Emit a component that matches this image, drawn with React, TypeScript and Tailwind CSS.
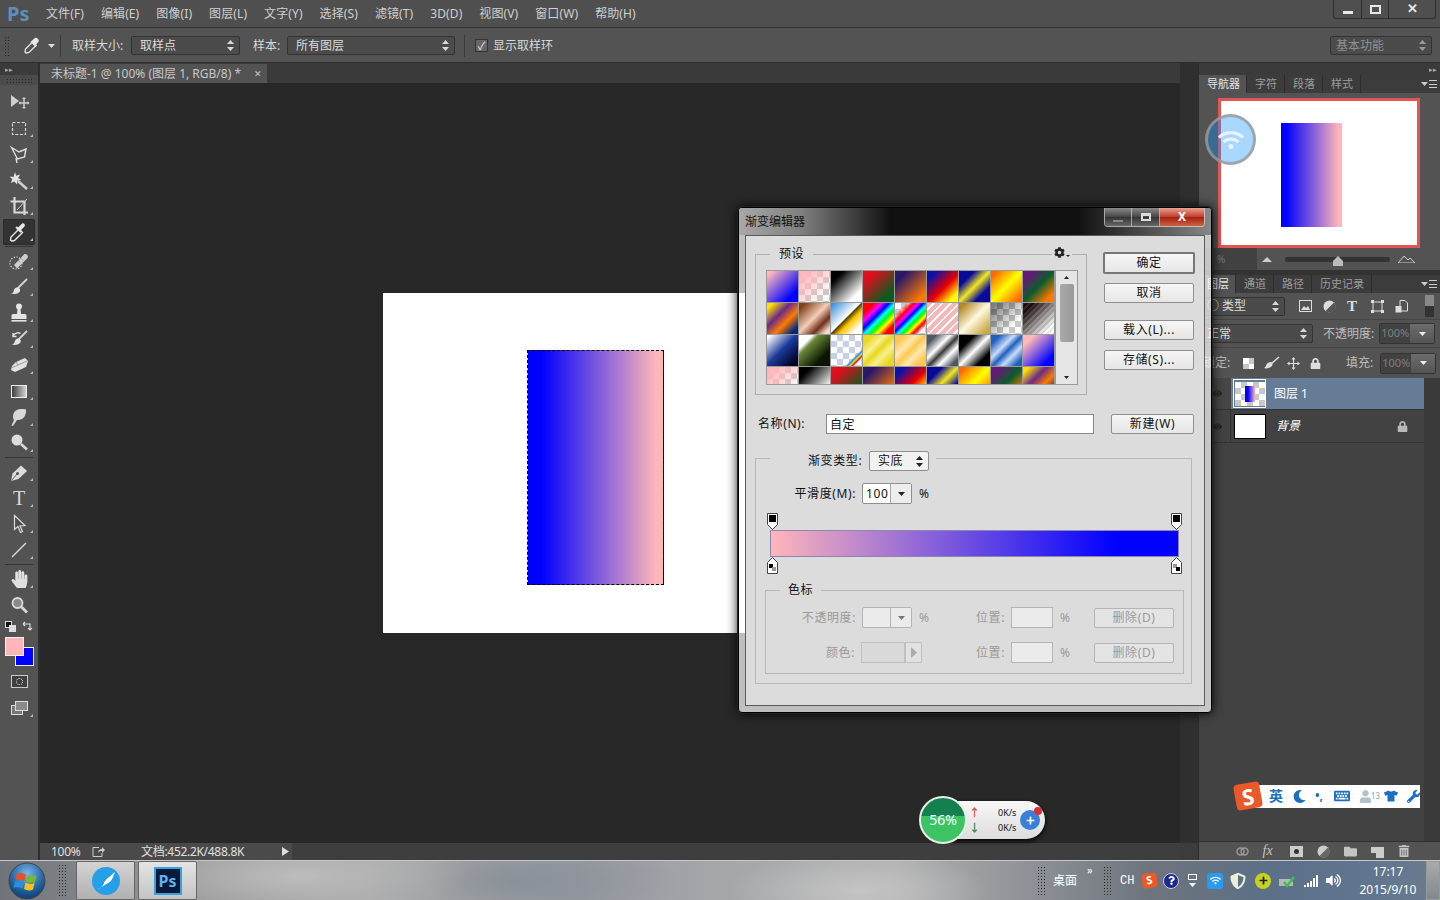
import React from "react";
import {
  FaCog,
  FaEye,
  FaFolder,
  FaHandPaper,
  FaKeyboard,
  FaLock,
  FaMoon,
  FaPlus,
  FaQuestion,
  FaShieldAlt,
  FaTrashAlt,
  FaTshirt,
  FaUser,
  FaVolumeUp,
  FaWifi,
  FaWrench,
} from "react-icons/fa";

const menus = ["文件(F)", "编辑(E)", "图像(I)", "图层(L)", "文字(Y)", "选择(S)", "滤镜(T)", "3D(D)", "视图(V)", "窗口(W)", "帮助(H)"];

const checker = "bg-[repeating-conic-gradient(#c8c8c8_0_25%,#ffffff_0_50%)] bg-[length:12px_12px]";

const presets = [
  "bg-[linear-gradient(135deg,#ffb8bc_8%,#0000ff_80%)]",
  "bg-[linear-gradient(135deg,#ffb8bc_15%,#ffb8bc00_85%),repeating-conic-gradient(#c8c8c8_0_25%,#ffffff_0_50%)] bg-[length:100%_100%,12px_12px]",
  "bg-[linear-gradient(135deg,#000000_20%,#ffffff_80%)]",
  "bg-[linear-gradient(135deg,#e00f1c_20%,#0b5a1e_80%)]",
  "bg-[linear-gradient(135deg,#2a1868_20%,#ff7800_85%)]",
  "bg-[linear-gradient(135deg,#0a10a8_15%,#e80000_55%,#ffff00_85%)]",
  "bg-[linear-gradient(135deg,#0a0a9a_25%,#f2e820_50%,#0a0a9a_75%)]",
  "bg-[linear-gradient(135deg,#ff6a00_10%,#ffff00_50%,#ff6a00_90%)]",
  "bg-[linear-gradient(135deg,#6a1878_15%,#0a5c2c_50%,#ff7800_85%)]",
  "bg-[linear-gradient(135deg,#ffe000_10%,#6a2a88_38%,#ff7a00_62%,#002a78_88%)]",
  "bg-[linear-gradient(135deg,#804018_10%,#f4cdb8_48%,#703018_72%,#f0d8c8_90%)]",
  "bg-[linear-gradient(135deg,#2a88d8,#ffffff_47%,#5a4000_50%,#ffc800_62%,#ffffff_85%)]",
  "bg-[linear-gradient(135deg,#ff0000_18%,#ff00ff_30%,#0000ff_42%,#00ffff_52%,#00ff00_62%,#ffff00_72%,#ff0000_84%)]",
  "bg-[linear-gradient(135deg,#ffffff00_18%,#ff0000_30%,#ff00ff_38%,#0000ff_46%,#00ffff_54%,#00ff00_62%,#ffff00_70%,#ff0000_78%,#ffffff00_88%),repeating-conic-gradient(#c8c8c8_0_25%,#ffffff_0_50%)] bg-[length:100%_100%,12px_12px]",
  "bg-[repeating-linear-gradient(135deg,#f4b8b8_0_4px,#ffffff_4px_6px)]",
  "bg-[linear-gradient(135deg,#b08a20_10%,#fff8e0_50%,#c8a840_90%)]",
  "bg-[linear-gradient(135deg,#00000090,#00000000_75%),repeating-conic-gradient(#c8c8c8_0_25%,#ffffff_0_50%)] bg-[length:100%_100%,12px_12px]",
  "bg-[repeating-linear-gradient(135deg,#ffffff18_0_2px,#00000018_2px_4px),linear-gradient(135deg,#201010_20%,#ffffff_85%)]",
  "bg-[linear-gradient(135deg,#ffffff_5%,#1a3a9a_48%,#000020_90%)]",
  "bg-[linear-gradient(135deg,#ffffff_22%,#6a8a3a_32%,#0a1400_75%)]",
  "bg-[linear-gradient(135deg,#d0d8f000_72%,#2090e0_76%,#f0e020_80%,#d02020_84%,#ffffff00_88%),repeating-conic-gradient(#c8d0e8_0_25%,#ffffff_0_50%)] bg-[length:100%_100%,12px_12px]",
  "bg-[linear-gradient(135deg,#e8d820_15%,#f8f090_35%,#e8d820_50%,#f8f090_65%,#e8d820_85%)]",
  "bg-[linear-gradient(135deg,#ffc850_15%,#ffe8b0_35%,#ffc850_50%,#ffe8b0_65%,#ffc850_85%)]",
  "bg-[linear-gradient(135deg,#505860_15%,#ffffff_38%,#383838_52%,#ffffff_68%,#505860_88%)]",
  "bg-[linear-gradient(135deg,#000000_25%,#ffffff_50%,#000000_78%)]",
  "bg-[linear-gradient(135deg,#2060c0_15%,#c8dcf8_38%,#2060c0_52%,#c8dcf8_68%,#2060c0_88%)]",
  "bg-[linear-gradient(135deg,#ffb8bc_18%,#0000ff_82%)]",
  "bg-[linear-gradient(135deg,#ffb8bc_15%,#ffb8bc00_85%),repeating-conic-gradient(#c8c8c8_0_25%,#ffffff_0_50%)] bg-[length:100%_100%,12px_12px]",
  "bg-[linear-gradient(135deg,#000000_20%,#ffffff_80%)]",
  "bg-[linear-gradient(135deg,#e00f1c_20%,#0b5a1e_80%)]",
  "bg-[linear-gradient(135deg,#2a1868_20%,#ff7800_85%)]",
  "bg-[linear-gradient(135deg,#0a10a8_15%,#e80000_55%,#ffff00_85%)]",
  "bg-[linear-gradient(135deg,#0a0a9a_25%,#f2e820_50%,#0a0a9a_75%)]",
  "bg-[linear-gradient(135deg,#ff6a00_10%,#ffff00_50%,#ff6a00_90%)]",
  "bg-[linear-gradient(135deg,#6a1878_15%,#0a5c2c_50%,#ff7800_85%)]",
  "bg-[linear-gradient(135deg,#ffe000_10%,#6a2a88_38%,#ff7a00_62%,#002a78_88%)]",
];

const UpDown = ({ color = "#d0d0d0" }: { color?: string }) => (
  <svg width="7" height="11" viewBox="0 0 7 11" fill={color}>
    <path d="M3.5 0 7 4H0zM3.5 11 0 7h7z" />
  </svg>
);

const Caret = ({ color = "#ddd" }: { color?: string }) => (
  <svg width="7" height="4" viewBox="0 0 7 4" fill={color}>
    <path d="M0 0h7L3.5 4z" />
  </svg>
);

const Grip = ({ className }: { className: string }) => (
  <div className={`bg-[radial-gradient(#2a2a2a_1px,transparent_1px)] bg-[length:3px_3px] ${className}`} />
);

const DarkSelect = ({ label, className, dim }: { label: string; className: string; dim?: boolean }) => (
  <div className={`flex h-[19px] items-center justify-between rounded-[2px] border border-[#333] bg-[#4b4b4b] pr-[5px] ${dim ? "pl-[5px] text-[#8f8f8f]" : "pl-2 text-[#dcdcdc]"} ${className}`}>
    <span>{label}</span>
    <UpDown color={dim ? "#999" : "#d8d8d8"} />
  </div>
);

// every tool is a 32x26 strip, the little corner triangle included
const Tool = ({ children, flyout = true, active }: { children: React.ReactNode; flyout?: boolean; active?: boolean }) => (
  <div className={`mx-auto h-[26px] w-[32px] rounded-[2px] ${active ? "bg-[#333] shadow-[inset_0_0_0_1px_#2a2a2a]" : ""}`}>
    <svg width="32" height="26" viewBox="3 0 32 26" fill="#cfcfcf" stroke="none">
      {children}
      {flyout && <polygon points="33,19 33,22 30,22" fill="#b8b8b8" />}
    </svg>
  </div>
);

const Sep = () => <div className="mx-[5px] my-px h-px bg-[#333]" />;

const Toolbar = () => (
  <div className="flex w-[38px] shrink-0 flex-col bg-[#535353]">
    <div className="flex h-[12px] items-center bg-[#3b3b3b] pl-[5px] text-[7px] leading-none text-[#aaa]">▸▸</div>
    <div className="flex h-[10px] items-center justify-center bg-[#4b4b4b]">
      <Grip className="h-[5px] w-[26px]" />
    </div>
    <div className="pt-[4px]">
      <Tool flyout={false}>
        <polygon points="11,6 19,12 11,18" />
        <path d="M24 9v10M19.5 14h9" stroke="#cfcfcf" strokeWidth="1.5" />
        <path d="M24 8l2 2h-4zM24 20l2-2h-4zM18.5 14l2-2v4zM29.5 14l-2-2v4z" />
      </Tool>
      <Tool>
        <rect x="12.5" y="7.5" width="13" height="12" fill="none" stroke="#d8d8d8" strokeWidth="1.2" strokeDasharray="3 1.6" />
      </Tool>
      <Tool>
        <path d="M11.5 6.5 19 11l7-3-1.5 8-7 2z" fill="none" stroke="#e0e0e0" strokeWidth="1.4" />
        <path d="M16 17l1 5" stroke="#e0e0e0" strokeWidth="1.4" />
      </Tool>
      <Tool>
        <path d="M15 5l1.2 3.8L20 7.5l-1.8 3.4 3 2.1-3.8.6-.4 3.9-2.6-2.9-3.7 1.4 1.7-3.6-2.7-2.8 3.9.4z" fill="#e4e4e4" />
        <path d="M18 14l9 8" stroke="#d0d0d0" strokeWidth="2.4" />
      </Tool>
      <Tool>
        <path d="M14.5 4v15.5H28M10.5 8.5h14V22" fill="none" stroke="#d8d8d8" strokeWidth="2.2" />
        <path d="M17 17 27 6" stroke="#cfcfcf" strokeWidth="1" />
      </Tool>
      <Tool active>
        <path d="M11.5 22l-1-1 .5-3 8-8 3.5 3.5-8 8z" fill="none" stroke="#e8e8e8" strokeWidth="1.4" />
        <path d="M18 8.5l3-3 1-.8c1.6-1.2 3.8 1 2.6 2.6l-.8 1-3 3 1 1-1.5 1.5-5-5 1.5-1.5z" fill="#e8e8e8" />
      </Tool>
      <Sep />
      <Tool>
        <circle cx="16" cy="15" r="6" fill="none" stroke="#cfcfcf" strokeWidth="1.2" strokeDasharray="1.4 1.4" />
        <path d="M14 17 24 6.5c2-1.5 5 1.5 3.5 3.5L17 20.5z" fill="#d0d0d0" />
        <path d="M18 12l3 3M20.5 10l3 3" stroke="#777" strokeWidth="1" strokeDasharray="1 1" />
      </Tool>
      <Tool>
        <path d="M17 15 27 5" stroke="#d4d4d4" strokeWidth="1.8" />
        <path d="M17 13.5c3 0 4 2.5 2.5 4.5-1.5 2-5 2.5-8.500 1.5 2.5-.5 2.5-2 3-3.5.4-1.5 1.5-2.5 3-2.5z" fill="#e4e4e4" />
      </Tool>
      <Tool>
        <circle cx="19" cy="6.5" r="3" fill="#e4e4e4" />
        <path d="M17.5 9h3l.5 5h-4z" fill="#e4e4e4" />
        <path d="M11.5 15.5c0-1 1-1.5 2-1.5h11c1 0 2 .5 2 1.5V19h-15z" fill="#e4e4e4" />
        <rect x="11.5" y="20" width="15" height="1.6" fill="#e4e4e4" />
      </Tool>
      <Tool>
        <path d="M18 14 27 5" stroke="#d4d4d4" strokeWidth="1.8" />
        <path d="M18 12.5c3 .5 3.5 3 2 4.5-2 2-5 2.5-8.5 1.5 2.5-.5 3-2 3.5-3.5.4-1.5 1.5-2.5 3-2.5z" fill="#e4e4e4" />
        <path d="M13 10c1.5-3 5-4 7.5-2.5M13 7v3.5h3.5" fill="none" stroke="#e0e0e0" strokeWidth="1.4" />
      </Tool>
      <Tool>
        <path d="M16 10 25 6l3 3-2 6-11 5-4-2 1-4z" fill="#e2e2e2" />
        <path d="M16 10l2 3-7 3" fill="none" stroke="#888" strokeWidth=".8" />
        <path d="M18 13l9-4" stroke="#888" strokeWidth=".8" />
      </Tool>
      <Tool>
        <defs>
          <linearGradient id="toolGrad" x1="0" x2="1" y1="0" y2="0">
            <stop offset="0" stopColor="#3a3a3a" />
            <stop offset="1" stopColor="#d8d8d8" />
          </linearGradient>
        </defs>
        <rect x="11.5" y="7.5" width="15" height="12" fill="url(#toolGrad)" stroke="#eee" />
      </Tool>
      <Tool>
        <path d="M14 16c-2-3-1-9 4-10.5 3-.8 7-.5 8 0 .5 3-1 8-4 9.5-2 1-4 1-5 1l-4 6-1.5-.5z" fill="#d8d8d8" />
      </Tool>
      <Tool>
        <circle cx="17" cy="10" r="5.5" fill="#dcdcdc" />
        <path d="M21 14l6 5.5" stroke="#d8d8d8" strokeWidth="2.6" />
      </Tool>
      <Sep />
      <Tool>
        <path d="M11 22l1.5-7.5L21 6.5l6 5.5-8.5 8z" fill="#dcdcdc" />
        <path d="M11.5 21.5 17 15" stroke="#555" strokeWidth=".9" />
        <circle cx="17.5" cy="14.5" r="1.5" fill="#555" />
      </Tool>
      <Tool>
        <text x="19" y="20" textAnchor="middle" fontFamily="Liberation Serif" fontSize="20" fill="#d8d8d8">T</text>
      </Tool>
      <Tool>
        <path d="M14.5 4.5v14l3.5-3 2.5 6 2-1-2.5-5.5 5-.5z" fill="#4e4e4e" stroke="#dcdcdc" strokeWidth="1.2" />
      </Tool>
      <Tool>
        <path d="M12 20 26 6" stroke="#d8d8d8" strokeWidth="1.4" />
      </Tool>
      <Sep />
      <Tool>
        <g transform="translate(10.5 4)">
          <FaHandPaper size={18} color="#e0e0e0" />
        </g>
      </Tool>
      <div className="mt-px">
        <Tool flyout={false}>
          <circle cx="17.5" cy="10" r="5" fill="#8a8a8a" stroke="#dcdcdc" strokeWidth="1.8" />
          <path d="M21.5 14l5.5 5.5" stroke="#d8d8d8" strokeWidth="2.8" />
        </Tool>
      </div>
    </div>

    <div className="flex h-[15px] items-center justify-between px-[5px]">
      <svg width="11" height="11" viewBox="0 0 11 11">
        <rect x=".5" y=".5" width="6" height="6" fill="#111" stroke="#ddd" />
        <rect x="4.5" y="4.5" width="6" height="6" fill="#ddd" stroke="#ddd" />
      </svg>
      <svg width="11" height="11" viewBox="0 0 11 11" fill="none" stroke="#ddd" strokeWidth="1.1">
        <path d="M1 3h7v6M1 3l2-2M1 3l2 2M8 9l2-2M8 9 6 7" />
      </svg>
    </div>
    {/* colour swatches overlap, that's what the negative margin is for */}
    <div className="mt-[3px] h-[30px] pl-[5px]">
      <div className="relative z-10 h-[19px] w-[19px] border border-[#f0f0f0] bg-[#ffb6ba]" />
      <div className="ml-[10px] mt-[-9px] h-[19px] w-[19px] border border-[#f0f0f0] bg-[#0000ff]" />
    </div>
    <div className="flex h-[28px] items-center justify-center">
      <div className="flex h-[13px] w-[17px] items-center justify-center border border-[#ccc] bg-[#3f3f3f]">
        <div className="h-[7px] w-[7px] rounded-full border border-dotted border-[#ddd]" />
      </div>
    </div>
    <div className="h-[26px]">
      <Tool>
        <rect x="11.5" y="10.5" width="11" height="9" fill="#777" stroke="#ddd" />
        <rect x="15.5" y="6.5" width="12" height="9" fill="#8a8a8a" stroke="#ddd" />
      </Tool>
    </div>
  </div>
);

const Canvas = () => (
  <div className="flex flex-1 items-center justify-center bg-[#282828]">
    <div className="h-[340px] w-[454px] bg-white pl-[144px] pt-[57px]">
      <div className="h-[235px] w-[137px] border border-dashed border-black bg-[linear-gradient(90deg,#0000ff_10%,#ffb6ba_95%)]" />
    </div>
  </div>
);

const PanelTabs = ({ tabs }: { tabs: string[] }) => (
  <div className="flex h-[18px] items-stretch bg-[#3c3c3c] text-[11px] leading-[18px]">
    {tabs.map((t, i) => (
      <div key={t} className={`border-r border-[#2e2e2e] pl-2 ${i === 0 ? "bg-[#535353] pr-[6px] text-[#e6e6e6]" : "pr-[7px] text-[#9c9c9c]"}`}>
        {t}
      </div>
    ))}
    <div className="ml-auto flex items-center gap-px pr-[3px]">
      <Caret color="#ccc" />
      <div className="h-[8px] w-[8px] border-y border-[#ccc] bg-[linear-gradient(#ccc,#ccc)] bg-[length:100%_1px] bg-center bg-no-repeat" />
    </div>
  </div>
);

const PctBox = () => (
  <div className="flex h-[21px] w-[56px] rounded-[2px] border border-[#333]">
    <div className="flex w-[30px] items-center justify-center bg-[#424242] text-[11px] text-[#7f7f7f]">100%</div>
    <div className="flex flex-1 items-center justify-center bg-[linear-gradient(#6c6c6c,#545454)]">
      <Caret color="#eee" />
    </div>
  </div>
);

const Panels = () => (
  <div className="flex w-[242px] shrink-0 flex-col border-l border-[#2c2c2c] bg-[#535353] text-[#cfcfcf]">
    <div className="flex h-[12px] items-center justify-end bg-[#3b3b3b] pr-[3px] text-[7px] leading-none text-[#aaa]">▸▸</div>
    <PanelTabs tabs={["导航器", "字符", "段落", "样式"]} />
    <div className="pl-[19px] pt-[5px]">
      <div className="h-[150px] w-[202px] border-[3px] border-[#e25555] bg-white pl-[60px] pt-[22px]">
        <div className="h-[104px] w-[61px] bg-[linear-gradient(90deg,#0000ff_8%,#ffb6ba_95%)]" />
      </div>
    </div>
    <div className="flex h-[22px] items-center">
      <div className="flex h-full w-[58px] items-center bg-[#414141] pl-[18px] text-[10px] text-[#777]">%</div>
      <svg className="ml-[5px]" width="10" height="5" viewBox="0 0 10 5" fill="#ccc"><path d="M0 5 5 0l5 5z" /></svg>
      <div className="ml-[13px] flex h-[5px] w-[105px] justify-center rounded-full bg-[#333]">
        <svg className="mt-[-1px]" width="10" height="10" viewBox="0 0 10 10" fill="#bbb"><path d="M5 0l5 5v5H0V5z" /></svg>
      </div>
      <svg className="ml-[8px]" width="17" height="8" viewBox="0 0 17 8" fill="none" stroke="#ccc"><path d="M0 8 6 1l4 4 2-2 5 5z" /></svg>
    </div>
    <div className="h-[5px] bg-[#333]" />
    <PanelTabs tabs={["图层", "通道", "路径", "历史记录"]} />
    <div className="flex h-[27px] items-center border-b border-[#444] text-[12px]">
      <DarkSelect label="○ 类型" className="ml-[-1px] w-[87px]" />
      <div className="ml-[14px] flex items-center gap-[11px]">
        <svg width="13" height="12" viewBox="0 0 13 12"><rect x=".5" y=".5" width="12" height="11" fill="none" stroke="#ddd" /><path d="M2 10l3-4 2 2 2-2 2 4z" fill="#ddd" /></svg>
        <svg width="13" height="13" viewBox="0 0 13 13"><circle cx="6.5" cy="6.5" r="6" fill="#ddd" /><path d="M11 2.5a6 6 0 0 1-8.5 8.5z" fill="#555" /></svg>
        <span className="w-[13px] font-['Liberation_Serif',serif] text-[15px] font-bold leading-none text-[#ddd]">T</span>
        <svg width="13" height="13" viewBox="0 0 13 13" fill="#ddd"><path d="M2 2h9v9H2z" fill="none" stroke="#ddd" /><path d="M0 0h3v3H0zM10 0h3v3h-3zM0 10h3v3H0zM10 10h3v3h-3z" /></svg>
        <svg width="13" height="13" viewBox="0 0 13 13"><path d="M5 .5h5l2.5 2.5v8H5z" fill="none" stroke="#ddd" /><rect x=".5" y="6" width="6" height="6.5" fill="#ddd" /></svg>
      </div>
      <div className="ml-auto mr-[6px] h-[22px] w-[9px] bg-[linear-gradient(#888_50%,#333_50%)]" />
    </div>
    <div className="flex h-[28px] items-center border-b border-[#444] text-[12px]">
      <DarkSelect label="正常" className="ml-[-1px] w-[115px]" />
      <span className="ml-[10px] text-[#bdbdbd]">不透明度:</span>
      <span className="ml-[5px]" />
      <PctBox />
    </div>
    <div className="flex h-[30px] items-center text-[12px]">
      <span className="w-[44px] pl-[4px] text-[#bdbdbd]">锁定:</span>
      <div className={`h-[11px] w-[11px] ${checker} bg-[length:6px_6px]`} />
      <svg className="ml-[9px]" width="17" height="14" viewBox="0 0 17 14"><path d="M8 8 16 1" stroke="#ddd" strokeWidth="1.6" /><path d="M8 6c2 .5 2 3 .5 4.5-1.5 1.5-5 2.5-8 1.5 2-.5 2.5-2 3-3.5S6 6 8 6z" fill="#ddd" /></svg>
      <svg className="ml-[7px]" width="13" height="13" viewBox="0 0 13 13" fill="#ddd" stroke="#ddd"><path d="M6.5 1v11M1 6.5h11" strokeWidth="1.2" /><path d="M6.5 0l2 2.5h-4zM6.5 13l2-2.5h-4zM0 6.5l2.5-2v4zM13 6.5l-2.5-2v4z" stroke="none" /></svg>
      <FaLock className="ml-[10px]" size={11} color="#ddd" />
      <span className="ml-[25px] text-[#bdbdbd]">填充:</span>
      <span className="ml-[7px]" />
      <PctBox />
    </div>
    <div className="flex flex-1 flex-col bg-[#3a3a3a] pr-[16px]">
      <div className="flex flex-1 flex-col bg-[#424242]">
        <div className="flex h-[32px] items-center border-b border-[#333] bg-[#667b95]">
          <div className="flex h-full w-[32px] items-center justify-center border-r border-[#444] bg-[#464646] pl-[6px]">
            <FaEye size={9} color="#222" />
          </div>
          <div className="ml-[2px] flex h-[29px] w-[33px] items-center justify-center border border-white">
            <div className={`flex h-[24px] w-[30px] items-center justify-center ${checker} bg-[length:8px_8px]`}>
              <div className="h-[16px] w-[10px] bg-[linear-gradient(90deg,#0000ff_30%,#ffb6ba)]" />
            </div>
          </div>
          <span className="ml-[8px] text-[12px] text-white">图层 1</span>
        </div>
        <div className="flex h-[33px] items-center border-b border-[#333]">
          <div className="flex h-full w-[32px] items-center justify-center border-r border-[#333] pl-[6px]">
            <FaEye size={9} color="#222" />
          </div>
          <div className="ml-[3px] h-[25px] w-[32px] border border-black bg-white" />
          <span className="ml-[10px] text-[12px] italic text-white">背景</span>
          <FaLock className="ml-auto mr-[16px]" size={11} color="#b8b8b8" />
        </div>
      </div>
    </div>
    <div className="flex h-[19px] items-center justify-center border-t border-[#2e2e2e] bg-[#535353] pl-[6px] text-[#c4c4c4]">
      <div className="flex items-center gap-[14px]">
        <svg width="13" height="9" viewBox="0 0 13 9" fill="none" stroke="#9a9a9a" strokeWidth="1.5"><rect x="1" y="1" width="7" height="7" rx="3.5" /><rect x="5" y="1" width="7" height="7" rx="3.5" /></svg>
        <span className="w-[13px] font-['Liberation_Serif',serif] text-[14px] italic leading-none">fx</span>
        <svg width="13" height="11" viewBox="0 0 13 11"><rect width="13" height="11" fill="#ccc" /><circle cx="6.5" cy="5.5" r="2.5" fill="#333" /></svg>
        <svg width="13" height="13" viewBox="0 0 13 13"><circle cx="6.5" cy="6.5" r="6" fill="#ccc" /><path d="M11 2.5a6 6 0 0 1-8.5 8.5z" fill="#666" /></svg>
        <FaFolder size={13} />
        <svg width="13" height="13" viewBox="0 0 13 13"><path d="M0 2h13v11H5V8H0z" fill="#ccc" /></svg>
        <FaTrashAlt size={12} />
      </div>
    </div>
  </div>
);

const Btn = ({ children, className = "" }: { children: React.ReactNode; className?: string }) => (
  <div className={`flex h-[20px] items-center justify-center rounded-[2px] border border-[#8f8f8f] bg-[linear-gradient(#f6f6f6,#e6e6e6)] text-[12px] text-[#111] ${className}`}>
    {children}
  </div>
);

const TopStop = () => (
  <svg width="11" height="17" viewBox="0 0 11 17">
    <path d="M.5.5h10v11l-5 5-5-5z" fill="#fff" stroke="#444" />
    <rect x="2" y="2" width="7" height="7" fill="#000" />
  </svg>
);

const BottomStop = ({ flip }: { flip?: boolean }) => (
  <svg width="11" height="17" viewBox="0 0 11 17">
    <path d="M5.5.5l5 5v11H.5v-11z" fill="#fff" stroke="#444" />
    <rect x="2" y="7" width="4" height="4" fill={flip ? "#999" : "#000"} />
    <rect x="5" y="10" width="4" height="4" fill={flip ? "#000" : "#999"} />
  </svg>
);

const GradientEditor = () => (
  <div className="absolute left-[738px] top-[207px] h-[506px] w-[474px] rounded-[4px] border border-black bg-white/70 shadow-[0_0_0_1px_#222,0_0_12px_#000]">
    <div className="flex h-[27px] items-start justify-between rounded-t-[3px] bg-[linear-gradient(90deg,#a8a8a8,#808080_13%,#111_32%,#111_72%,#555_88%,#888)] px-[6px]">
      <span className="mt-[5px] text-[12px] text-[#111]">渐变编辑器</span>
      <div className="flex h-[19px] overflow-hidden rounded-b-[4px] border border-t-0 border-[#ddd]/70">
        <div className="flex w-[27px] items-end justify-center border-r border-[#ddd]/60 bg-[linear-gradient(#8a8a8a,#444_50%,#333_50%,#666)] pb-[4px]">
          <div className="h-[2px] w-[10px] bg-[#888]" />
        </div>
        <div className="flex w-[28px] items-center justify-center border-r border-[#ddd]/60 bg-[linear-gradient(#8a8a8a,#444_50%,#333_50%,#666)]">
          <div className="h-[8px] w-[10px] border-2 border-t-[3px] border-[#ddd]" />
        </div>
        <div className="flex w-[44px] items-center justify-center bg-[linear-gradient(#e8a090,#c43a28_50%,#a02010_50%,#d06040)] text-[12px] font-bold leading-none text-white">
          X
        </div>
      </div>
    </div>
    <div className="mx-[6px] h-[471px] w-[460px] border border-[#5a5a5a] bg-[#dcdcdc] pl-[9px] pt-[10px] text-[12px] tracking-[0.6px] text-[#111]">
      <div className="flex items-start">
        <fieldset className="relative w-[332px] border border-[#b0b0b0] pb-[9px] pl-[10px] pt-[8px]">
          <legend className="ml-[4px] h-[16px] px-[9px] leading-[16px]">预设</legend>
          <div className="absolute right-[14px] top-[-15px] flex items-center bg-[#dcdcdc] px-[2px]">
            <FaCog size={11} color="#222" />
            <svg className="ml-[1px] mt-[6px]" width="4" height="2" viewBox="0 0 4 2" fill="#222"><path d="M0 0h4L2 2z" /></svg>
          </div>
          <div className="flex h-[115px] w-[312px] overflow-hidden border border-[#9a9a9a]">
            <div className="grid h-[130px] w-[289px] grid-cols-[repeat(9,31px)] auto-rows-[31px] gap-px bg-[#9a9a9a]">
              {presets.map((p, i) => (
                <div key={i} className={p} />
              ))}
            </div>
            <div className="flex w-[21px] flex-col items-center bg-[#e6e6e6] py-[5px]">
              <svg width="5" height="3" viewBox="0 0 5 3" fill="#222"><path d="M2.5 0 5 3H0z" /></svg>
              <div className="mt-[5px] h-[58px] w-[14px] rounded-[2px] bg-[linear-gradient(90deg,#aaa,#999)]" />
              <svg className="mt-auto" width="5" height="3" viewBox="0 0 5 3" fill="#222"><path d="M0 0h5L2.5 3z" /></svg>
            </div>
          </div>
        </fieldset>
        <div className="ml-[16px] mt-[6px] flex w-[92px] flex-col">
          <Btn className="h-[22px] border-2 border-[#777]">确定</Btn>
          <Btn className="ml-px mt-[9px] w-[90px]">取消</Btn>
          <Btn className="ml-px mt-[17px] w-[90px]">载入(L)...</Btn>
          <Btn className="ml-px mt-[10px] w-[90px]">存储(S)...</Btn>
        </div>
      </div>

      <div className="mt-[18px] flex h-[21px] items-center pl-[3px]">
        <span className="w-[68px]">名称(N):</span>
        <div className="h-[20px] w-[268px] border border-[#8a8a8a] bg-white pl-[3px] leading-[20px]">自定</div>
        <Btn className="ml-[17px] w-[83px]">新建(W)</Btn>
      </div>

      <fieldset className="mt-[17px] w-[437px] border border-[#b8b8b8] pb-[9px]">
        <legend className="ml-[14px] flex h-[14px] w-[166px] items-start pl-[38px]">
          <span className="w-[61px] leading-[20px]">渐变类型:</span>
          <div className="flex h-[20px] w-[60px] items-center justify-between rounded-[2px] border border-[#8f8f8f] bg-[#f2f2f2] pl-[8px] pr-[5px]">
            <span>实底</span>
            <UpDown color="#222" />
          </div>
        </legend>
        <div className="mt-[18px] flex h-[21px] items-center">
          <span className="w-[100px] text-right">平滑度(M):</span>
          <div className="ml-[6px] flex h-[21px] w-[50px] rounded-[2px] border border-[#8f8f8f] bg-white">
            <span className="w-[28px] border-r border-[#aaa] pl-[3px] leading-[19px]">100</span>
            <div className="flex flex-1 items-center justify-center bg-[#ededed]"><Caret color="#222" /></div>
          </div>
          <span className="ml-[7px]">%</span>
        </div>
        <div className="ml-[11px] mt-[9px] flex w-[415px] justify-between">
          <TopStop />
          <TopStop />
        </div>
        <div className="ml-[14px] h-[27px] w-[409px] border border-[#8f86b0] bg-[linear-gradient(90deg,#ffb6ba,#0000ff_85%)]" />
        <div className="ml-[11px] flex w-[415px] justify-between">
          <BottomStop />
          <BottomStop flip />
        </div>
        <fieldset className="ml-[9px] mt-[8px] w-[419px] border border-[#b8b8b8] pb-[10px] text-[#9a9a9a]">
          <legend className="ml-[14px] h-[16px] px-[8px] leading-[16px] text-[#111]">色标</legend>
          <div className="mt-[9px] flex h-[21px] items-center">
            <span className="w-[90px] text-right">不透明度:</span>
            <div className="ml-[6px] flex h-[21px] w-[50px] rounded-[2px] border border-[#b4b4b4] bg-[#ebebeb]">
              <span className="w-[28px] border-r border-[#b4b4b4]" />
              <div className="flex flex-1 items-center justify-center"><Caret color="#777" /></div>
            </div>
            <span className="ml-[7px] w-[12px]">%</span>
            <span className="w-[74px] text-right">位置:</span>
            <div className="ml-[6px] h-[21px] w-[42px] border border-[#b4b4b4] bg-[#ebebeb]" />
            <span className="ml-[7px] w-[34px]">%</span>
            <Btn className="w-[80px] border-[#b4b4b4] !bg-none bg-[#e4e4e4] !text-[#9a9a9a]">删除(D)</Btn>
          </div>
          <div className="mt-[14px] flex h-[21px] items-center">
            <span className="w-[89px] text-right">颜色:</span>
            <div className="ml-[6px] flex h-[21px] w-[61px] border border-[#c0c0c0]">
              <div className="w-[44px] border-r-2 border-[#c0c0c0] bg-[#dadada]" />
              <div className="flex flex-1 items-center justify-center bg-[#e2e2e2]">
                <svg width="6" height="11" viewBox="0 0 6 11" fill="#aaa"><path d="M0 0l6 5.5L0 11z" /></svg>
              </div>
            </div>
            <span className="w-[9px]" />
            <span className="w-[74px] text-right">位置:</span>
            <div className="ml-[6px] h-[21px] w-[42px] border border-[#b4b4b4] bg-[#ebebeb]" />
            <span className="ml-[7px] w-[34px]">%</span>
            <Btn className="w-[80px] border-[#b4b4b4] !bg-none bg-[#e4e4e4] !text-[#9a9a9a]">删除(D)</Btn>
          </div>
        </fieldset>
      </fieldset>
    </div>
  </div>
);

const SogouMark = ({ size }: { size: string }) => (
  <div className={`flex rotate-[-10deg] items-center justify-center rounded-[4px] bg-[#ea5a28] font-bold text-white ${size}`}>S</div>
);

const Taskbar = () => (
  <div className="flex h-[40px] items-center border-t border-[#c8c8c8] bg-[radial-gradient(ellipse_130px_40px_at_860px_30px,#c4c4c4,transparent),radial-gradient(ellipse_170px_40px_at_300px_15px,#bcbcbc,transparent),radial-gradient(ellipse_160px_50px_at_520px_20px,#8a9098,transparent),linear-gradient(90deg,#70747a,#9a9a9a_14%,#aeaeae_30%,#989ca2_40%,#a4a6aa_50%,#b0b0b0_62%,#8c9096_72%,#6e747c_80%,#5c7088_88%,#60758e_95%,#6c7c8e)] text-white">
    <svg className="ml-[8px]" width="38" height="38" viewBox="0 0 38 38">
      <defs>
        <radialGradient id="orb" cx=".5" cy=".3" r=".8">
          <stop offset="0" stopColor="#7fb8e8" />
          <stop offset=".6" stopColor="#1f5f9c" />
          <stop offset="1" stopColor="#0a2f5c" />
        </radialGradient>
      </defs>
      <circle cx="19" cy="19" r="18" fill="url(#orb)" stroke="#444" />
      <path d="M9 12c3-1.5 6-1 9 .5L16.5 19c-3-1.5-6-2-9-.5z" fill="#e8502a" />
      <path d="M19.5 13c3 1.5 6 2 9 .5L27 20c-3 1.5-6 1-9-.5z" fill="#7ab828" />
      <path d="M7 19.5c3-1.5 6-1 9 .5L14.5 26.5c-3-1.5-6-2-9-.5z" fill="#2f8ae0" />
      <path d="M17.5 20.5c3 1.5 6 2 9 .5L25 27.5c-3 1.5-6 1-9-.5z" fill="#f8c020" />
    </svg>
    <Grip className="ml-[12px] h-[33px] w-[9px]" />
    <div className="ml-[9px] flex h-[39px] w-[59px] items-center justify-center rounded-[2px] border border-[#666] bg-[linear-gradient(#d4d4d4,#b0b0b0)]">
      <svg width="28" height="28" viewBox="0 0 28 28">
        <circle cx="14" cy="14" r="14" fill="#25a0e8" />
        <path d="M5 23c4-2 6-4 7-7 1-3 5-6 11-11-2 6-4 10-7 11-3 2-7 4-11 7z" fill="#fff" />
      </svg>
    </div>
    <div className="ml-[3px] flex h-[39px] w-[59px] items-center justify-center rounded-[2px] border border-[#666] bg-[linear-gradient(#e4e4e4,#c4c4c4)]">
      <div className="flex h-[28px] w-[28px] items-center justify-center border-2 border-[#3a9fe0] bg-[#0a1a38] text-[16px] font-bold leading-none text-[#5ab4f0]">Ps</div>
    </div>

    <Grip className="ml-auto h-[30px] w-[9px]" />
    <span className="ml-[7px] w-[26px] text-[12px]">桌面</span>
    <span className="ml-[8px] w-[10px] self-start text-[11px] leading-[18px]">»</span>
    <Grip className="ml-[6px] h-[30px] w-[9px]" />
    <span className="ml-[8px] w-[16px] font-['Liberation_Mono',monospace] text-[12px]">CH</span>
    <SogouMark size="ml-[6px] h-[15px] w-[15px] text-[11px]" />
    <div className="ml-[6px] flex h-[16px] w-[16px] items-center justify-center rounded-full border border-[#ccd] bg-[#1a2a90]">
      <FaQuestion size={9} color="#fff" />
    </div>
    <div className="ml-[7px] flex w-[12px] flex-col items-center gap-[3px]">
      <div className="h-[6px] w-[9px] border border-white" />
      <Caret color="#fff" />
    </div>
    <div className="ml-[9px] flex h-[16px] w-[16px] items-center justify-center rounded-[3px] bg-[#2a9af0]">
      <FaWifi size={11} color="#fff" />
    </div>
    <FaShieldAlt className="ml-[7px]" size={16} color="#e8f0d8" />
    <div className="ml-[9px] flex h-[16px] w-[16px] items-center justify-center rounded-full bg-[#c8d020]">
      <FaPlus size={9} color="#123" />
    </div>
    <svg className="ml-[7px]" width="18" height="14" viewBox="0 0 18 14">
      <path d="M1 5h11l3 3v4H1z" fill="#b8b8b8" />
      <path d="M6 8l3 4 7-9" fill="none" stroke="#3cc050" strokeWidth="2.5" />
    </svg>
    <svg className="ml-[8px]" width="15" height="12" viewBox="0 0 15 12" fill="#fff">
      <path d="M0 10h2v2H0zM3 8h2v4H3zM6 6h2v6H6zM9 3h2v9H9zM12 0h2v12h-2z" />
    </svg>
    <FaVolumeUp className="ml-[7px]" size={15} color="#fff" />
    <div className="ml-[14px] w-[66px] text-center text-[12px] leading-[18px]">
      <div>17:17</div>
      <div>2015/9/10</div>
    </div>
    <div className="ml-[5px] h-full w-[14px] border border-[#999] bg-[linear-gradient(#aaa,#808890)]" />
  </div>
);

const NetWidget = () => (
  <div className="absolute left-[919px] top-[796px] flex h-[48px] w-[126px] items-center">
    <div className="ml-[24px] flex h-[38px] w-[102px] items-center rounded-r-full bg-[linear-gradient(#f8f8f8,#dcdcdc)] pl-[26px] shadow-[0_2px_5px_#000]">
      <div className="flex w-[10px] flex-col gap-[3px] text-[11px] font-bold leading-[12px]">
        <span className="text-[#d0584a]">↑</span>
        <span className="text-[#3a8a50]">↓</span>
      </div>
      <div className="ml-[19px] flex flex-col gap-[3px] text-[9px] leading-[12px] text-[#111]">
        <span>0K/s</span>
        <span>0K/s</span>
      </div>
      <div className="relative ml-[4px] flex h-[20px] w-[20px] items-center justify-center rounded-full bg-[#3a7fd8]">
        <FaPlus size={9} color="#fff" />
        <div className="absolute right-[-2px] top-[-3px] h-[8px] w-[8px] rounded-full bg-[#d8303a]" />
      </div>
    </div>
    <div className="absolute left-0 top-0 flex h-[48px] w-[48px] items-center justify-center rounded-full border-2 border-[#e8f0e8] bg-[linear-gradient(#15804f_42%,#3cc464_42%)] text-[14px] leading-none text-white">
      56%
    </div>
  </div>
);

const SogouBar = () => (
  <div className="absolute left-[1235px] top-[783px] flex items-center">
    <SogouMark size="z-10 h-[26px] w-[26px] text-[22px] leading-none" />
    <div className="ml-[-6px] flex h-[23px] w-[165px] items-center bg-white pl-[14px] text-[#1a6fc0]">
      <span className="w-[24px] text-[14px] font-bold leading-none">英</span>
      <FaMoon size={13} />
      <span className="ml-[9px] w-[12px] text-[12px] font-bold leading-none">•,</span>
      <FaKeyboard className="ml-[7px]" size={16} />
      <FaUser className="ml-[9px]" size={13} color="#b4c0cc" />
      <span className="ml-[-1px] w-[10px] text-[8px] leading-none text-[#8fa0b0]">13</span>
      <FaTshirt className="ml-[3px]" size={14} />
      <FaWrench className="ml-[9px]" size={13} />
    </div>
  </div>
);

const WifiBubble = () => (
  <div className="absolute left-[1205px] top-[114px] flex h-[51px] w-[51px] items-center justify-center rounded-full border-[3px] border-[#9a9a9a]/80 bg-[#0e93ff]/[0.36]">
    <FaWifi size={26} color="#f0f6ff" className="opacity-90" />
  </div>
);

export default function App() {
  return (
    <div className="relative flex h-[900px] w-[1440px] flex-col overflow-hidden bg-[#535353] font-['Noto_Sans','Noto_Sans_CJK_SC',sans-serif] text-[12px] text-[#d8d8d8]">
      {/* menu bar */}
      <div className="flex h-[28px] shrink-0 items-center border-b border-[#333] bg-[#4f4f4f]">
        <span className="ml-[7px] w-[39px] text-[20px] font-bold leading-none text-[#5f8fbd]">Ps</span>
        <div className="flex gap-[17px] pt-px tracking-[0.1px]">
          {menus.map((m) => (
            <span key={m} className="text-[#cfcfcf]">{m}</span>
          ))}
        </div>
        <div className="ml-auto mr-[4px] flex h-[19px] self-start overflow-hidden rounded-b-[3px] border border-t-0 border-[#2e2e2e] text-[#e8e8e8]">
          <div className="flex w-[28px] items-end justify-center border-r border-[#2e2e2e] pb-[4px]">
            <div className="h-[3px] w-[10px] bg-[#e8e8e8]" />
          </div>
          <div className="flex w-[27px] items-center justify-center border-r border-[#2e2e2e]">
            <div className="h-[9px] w-[11px] border-2 border-[#e8e8e8]" />
          </div>
          <div className="w-[46px] text-center text-[13px] font-bold leading-[16px]">✕</div>
        </div>
      </div>

      {/* tool options */}
      <div className="flex h-[35px] shrink-0 items-center border-b border-[#2e2e2e] bg-[#535353] pt-px">
        <Grip className="ml-[4px] h-[20px] w-[6px]" />
        <svg className="ml-[14px]" width="18" height="18" viewBox="0 0 18 18">
          <path d="M2 16l-1-1 .5-3 7-7 3.5 3.5-7 7z" fill="none" stroke="#e8e8e8" strokeWidth="1.3" />
          <path d="M8 3.5l3-2.5c1.6-1.2 4.8 2 3.6 3.6l-2.5 3 1 1L11.6 10 6.5 5 8 3.5z" fill="#e8e8e8" />
        </svg>
        <div className="ml-[6px]"><Caret /></div>
        <div className="ml-[5px] h-[22px] w-px bg-[#3c3c3c]" />
        <span className="ml-[11px] w-[59px]">取样大小:</span>
        <DarkSelect label="取样点" className="w-[109px]" />
        <span className="ml-[13px] w-[34px]">样本:</span>
        <DarkSelect label="所有图层" className="w-[168px]" />
        <div className="ml-[9px] h-[22px] w-px bg-[#3c3c3c]" />
        <div className="ml-[10px] flex h-[13px] w-[13px] items-center justify-center border border-[#333] bg-[#666] text-[11px] leading-none text-[#e8e8e8]">✓</div>
        <span className="ml-[5px]">显示取样环</span>
        <DarkSelect label="基本功能" dim className="ml-auto mr-[8px] w-[102px]" />
      </div>

      {/* workspace */}
      <div className="flex min-h-0 flex-1">
        <Toolbar />
        <div className="w-[2px] shrink-0 bg-[#2e2e2e]" />
        <div className="flex w-[1140px] shrink-0 flex-col">
          <div className="flex h-[20px] shrink-0 items-end bg-[#3a3a3a]">
            <div className="flex h-[19px] w-[227px] items-center justify-between bg-[#535353] pl-[11px] pr-[5px] text-[#c8c8c8]">
              <span>未标题-1 @ 100% (图层 1, RGB/8) *</span>
              <span className="text-[9px] leading-none">✕</span>
            </div>
          </div>
          <Canvas />
          <div className="flex h-[17px] shrink-0 bg-[#3e3e3e]">
            <div className="flex w-[252px] items-center bg-[#4a4a4a] pl-[11px] tracking-[-0.3px] text-[#e0e0e0]">
              <span className="w-[40px]">100%</span>
              <svg className="ml-[1px]" width="13" height="11" viewBox="0 0 13 11" fill="none" stroke="#ccc"><path d="M7 1.5H1v9h9V7" /><path d="M6 7c0-3 2-4 4-4V1l3 3-3 3V5c-2 0-3 .5-4 2z" fill="#ccc" stroke="none" /></svg>
              <span className="ml-[36px] w-[141px]">文档:452.2K/488.8K</span>
              <svg width="7" height="9" viewBox="0 0 7 9" fill="#ddd"><path d="M0 0l7 4.5L0 9z" /></svg>
            </div>
          </div>
        </div>
        <div className="flex w-[18px] shrink-0 flex-col bg-[#2f2f2f]">
          <div className="mt-auto h-[17px] bg-[#3c3c3c]" />
        </div>
        <Panels />
      </div>

      <Taskbar />

      {/* floating stuff on top of the workspace */}
      <WifiBubble />
      <GradientEditor />
      <NetWidget />
      <SogouBar />
    </div>
  );
}
